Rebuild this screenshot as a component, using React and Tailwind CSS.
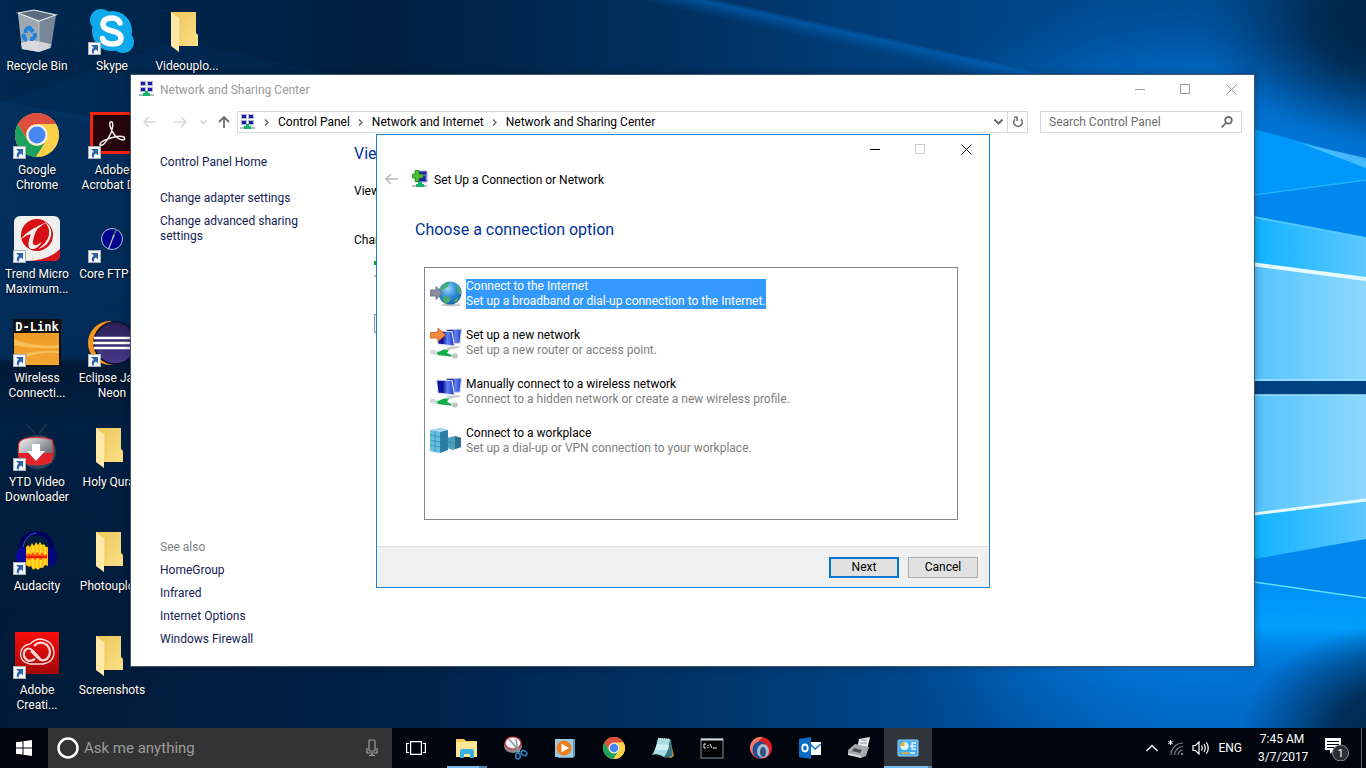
import { useState } from 'react'

const SIDE_LINKS = ['HomeGroup', 'Infrared', 'Internet Options', 'Windows Firewall']
const CRUMBS = ['Control Panel', 'Network and Internet', 'Network and Sharing Center']

/* ---------- wallpaper ---------- */

function Wallpaper() {
  return (
    <svg className="absolute inset-0 w-full h-full" viewBox="0 0 1366 728" preserveAspectRatio="none" aria-hidden="true">
      <defs>
        <linearGradient id="wpTop" x1="0" y1="0" x2="1" y2="0">
          <stop offset="0" stopColor="#002850" />
          <stop offset=".28" stopColor="#001f41" />
          <stop offset=".5" stopColor="#003060" />
          <stop offset=".65" stopColor="#003f7c" />
          <stop offset=".8" stopColor="#00488c" />
          <stop offset="1" stopColor="#004483" />
        </linearGradient>
        <linearGradient id="wpLow" x1="0" y1="0" x2="1" y2="0">
          <stop offset="0" stopColor="#001b38" />
          <stop offset=".28" stopColor="#002047" />
          <stop offset=".5" stopColor="#003366" />
          <stop offset=".7" stopColor="#004b93" />
          <stop offset=".85" stopColor="#006ac9" />
          <stop offset="1" stopColor="#0072d2" />
        </linearGradient>
        <linearGradient id="wpFade" x1="0" y1="0" x2="0" y2="1">
          <stop offset=".3" stopColor="#fff" stopOpacity="0" />
          <stop offset=".85" stopColor="#fff" />
        </linearGradient>
        <mask id="wpLowMask">
          <rect width="1366" height="728" fill="url(#wpFade)" />
        </mask>
        <radialGradient id="wpGlow" gradientUnits="userSpaceOnUse" cx="1200" cy="385" r="410">
          <stop offset="0" stopColor="#00a0ff" />
          <stop offset=".5" stopColor="#0090f8" />
          <stop offset=".75" stopColor="#0070d0" stopOpacity=".8" />
          <stop offset="1" stopColor="#0058a8" stopOpacity="0" />
        </radialGradient>
        <linearGradient id="wpPane" x1="0" y1="0" x2="1" y2="0">
          <stop offset=".4" stopColor="#4cc0ff" />
          <stop offset="1" stopColor="#8ed8ff" />
        </linearGradient>
        <linearGradient id="wpEdge" x1="0" y1="0" x2="1" y2="0">
          <stop offset=".45" stopColor="#0cb2ff" />
          <stop offset="1" stopColor="#5cc8ff" />
        </linearGradient>
        <linearGradient id="wpBeam" gradientUnits="userSpaceOnUse" x1="886" y1="37" x2="882" y2="55">
          <stop offset="0" stopColor="#0068c0" stopOpacity=".1" />
          <stop offset=".25" stopColor="#0068c0" stopOpacity=".6" />
          <stop offset="1" stopColor="#0058a8" stopOpacity="0" />
        </linearGradient>
        <radialGradient id="wpDark">
          <stop offset="0" stopColor="#00203f" />
          <stop offset=".45" stopColor="#00284e" stopOpacity=".9" />
          <stop offset=".75" stopColor="#003566" stopOpacity=".45" />
          <stop offset="1" stopColor="#003f7a" stopOpacity="0" />
        </radialGradient>
        <linearGradient id="wpLowGlow" x1="0" y1="0" x2="0" y2="1">
          <stop offset="0" stopColor="#0090f6" />
          <stop offset=".5" stopColor="#00a2ff" stopOpacity=".9" />
          <stop offset="1" stopColor="#0078dc" stopOpacity="0" />
        </linearGradient>
        <linearGradient id="wpUpGlow" x1="0" y1="1" x2="0" y2="0">
          <stop offset="0" stopColor="#0080e4" stopOpacity=".9" />
          <stop offset="1" stopColor="#0060b8" stopOpacity="0" />
        </linearGradient>
        <linearGradient id="wpShade" x1="0" y1="0" x2="0" y2="1">
          <stop offset="0" stopColor="#001228" stopOpacity="0" />
          <stop offset=".2" stopColor="#001228" stopOpacity=".55" />
          <stop offset="1" stopColor="#001228" stopOpacity="0" />
        </linearGradient>
      </defs>
      <rect width="1366" height="728" fill="url(#wpTop)" />
      <rect width="1366" height="728" fill="url(#wpLow)" mask="url(#wpLowMask)" />
      <path d="M0 102L400 165V360H0z" fill="#0a4b8c" opacity=".22" />
      <path d="M180 40L400 90V200L0 102z" fill="#0a4b8c" opacity=".12" />
      <rect y="355" width="400" height="70" fill="url(#wpShade)" />
      <rect x="740" width="626" height="728" fill="url(#wpGlow)" />
      <path d="M720 0L1052 76H960L640 0z" fill="url(#wpBeam)" />
      <path d="M1150 60L1366 100V200H1150z" fill="url(#wpUpGlow)" />
      <ellipse cx="1410" cy="20" rx="210" ry="125" fill="url(#wpDark)" />
      <path d="M1150 100L1366 160V180L1150 208z" fill="#0098fa" />
      <path d="M1150 208L1366 180V238L1150 198z" fill="#0088ee" />
      <path d="M1254 195L1366 180" stroke="#1cb4ff" strokeWidth="1.5" />
      <path d="M1300 143L1366 158V168z" fill="#6fd0ff" opacity=".6" />
      <path d="M1150 197L1366 238V279L1150 251z" fill="url(#wpEdge)" />
      <path d="M1254 217L1366 238" stroke="#5fd0ff" strokeWidth="2" opacity=".8" />
      <path d="M1150 251L1366 279V381H1150z" fill="url(#wpPane)" />
      <path d="M1150 251L1366 279" stroke="#e6fbff" strokeWidth="4" />
      <rect x="1240" y="580" width="126" height="96" fill="url(#wpLowGlow)" />
      <path d="M1150 560L1366 539V598L1150 567z" fill="#0088ee" />
      <path d="M1254 582L1366 598" stroke="#5fe0ff" strokeWidth="1.5" />
      <path d="M1150 527L1366 500V539L1150 578z" fill="url(#wpEdge)" />
      <path d="M1150 395H1366V500L1150 527z" fill="url(#wpPane)" />
      <path d="M1150 527L1366 500" stroke="#e6fbff" strokeWidth="3" />
      <rect x="1150" y="381" width="216" height="14" fill="#004282" />
      <path d="M1150 380H1366M1150 395H1366" stroke="#a0e4ff" strokeWidth="1.5" />
      <ellipse cx="1410" cy="735" rx="170" ry="112" fill="url(#wpDark)" />
    </svg>
  )
}

/* ---------- desktop icons, all on a 48px box ---------- */

function Folder() {
  return (
    <svg viewBox="0 0 48 48" className="w-12 h-12">
      <defs>
        <linearGradient id="fldBack" x1="0" y1="0" x2="1" y2="1">
          <stop offset="0" stopColor="#edc65a" />
          <stop offset="1" stopColor="#fbdf86" />
        </linearGradient>
      </defs>
      <path d="M8 5H33V26L35 28V39H16L8 30z" fill="url(#fldBack)" />
      <path d="M8 5L17 12V35H16V45L8 39z" fill="#ffe8a6" />
      <path d="M17 12V35" stroke="#e8c465" strokeWidth=".8" />
    </svg>
  )
}

function RecycleBin() {
  return (
    <svg viewBox="0 0 48 48" className="w-12 h-12">
      <path d="M5 6L9 42L26 45L38 41L43 8L26 14z" fill="#8d99a6" opacity=".85" />
      <path d="M5 6L9 42L26 45L26 14z" fill="#a8b0b8" opacity=".8" />
      <path d="M5 6L21 3L43 8L26 14z" fill="#5a6b7e" stroke="#e4e8ea" strokeWidth="1.2" />
      <path d="M8 36L19 33L38 37L37 41L26 45L9 42z" fill="#e0e2e3" opacity=".85" />
      <path d="M26 14V44" stroke="#ccd2d6" strokeWidth=".7" />
      <g fill="none" stroke="#1d83dc" strokeWidth="4">
        <path d="M12.500 26Q13 20 17 21L20 25" />
        <path d="M21.500 26Q23 31 19 32H17" />
        <path d="M11 27Q10 32 14 33" />
      </g>
    </svg>
  )
}

function Skype() {
  return (
    <svg viewBox="0 0 48 48" className="w-12 h-12">
      <g fill="#0faaec">
        <circle cx="13" cy="13" r="11" />
        <circle cx="35" cy="35" r="11" />
        <circle cx="24" cy="24" r="20" />
      </g>
      <path d="M32 16Q30 11 24 11Q15 11 15 17.500Q15 22 24 24Q33 26 33 31Q33 37 24.500 37Q16 37 14.500 31.500" fill="none" stroke="#fff" strokeWidth="5.500" strokeLinecap="round" />
    </svg>
  )
}

function Chrome({ className }) {
  return (
    <svg viewBox="0 0 48 48" className={className}>
      <circle cx="24" cy="24" r="22" fill="#fcd04b" />
      <path d="M4.950 13A22 22 0 0 1 43.050 13H24A11 11 0 0 0 14.470 29.500z" fill="#de4f41" />
      <path d="M4.950 13A22 22 0 0 0 23 46L33.500 29.500A11 11 0 0 1 14.470 29.500z" fill="#1ca15f" />
      <path d="M43.050 13A22 22 0 0 1 23 46L33.500 29.500A11 11 0 0 0 24 13z" fill="#fdd04a" />
      <circle cx="24" cy="24" r="10.500" fill="#f3f3f3" />
      <circle cx="24" cy="24" r="8.500" fill="#4487f3" />
    </svg>
  )
}

function Acrobat() {
  return (
    <svg viewBox="0 0 48 48" className="w-12 h-12">
      <rect x="3.500" y="2.500" width="44" height="39" fill="#26060a" stroke="#f8230b" strokeWidth="3" />
      <path d="M12 34Q16 36 23 22Q26 13 24 11Q21 10 22 15Q26 27 34 29Q38 29 36 26Q31 24 20 28Q11 31 12 34z" fill="none" stroke="#f3eeee" strokeWidth="1.500" />
    </svg>
  )
}

function TrendMicro() {
  return (
    <svg viewBox="0 0 48 48" className="w-12 h-12">
      <rect x="1" y="1" width="46" height="45" rx="6" fill="#efefed" />
      <path d="M47 34V40Q47 46 41 46H13Q35 46 47 34z" fill="#d7141b" />
      <circle cx="24" cy="20" r="16" fill="#d50f13" />
      <path d="M7 25Q14 15 34 7Q24 13 20 19Q14 19 7 25z" fill="#efefed" />
      <path d="M20 14L25 12Q19 24 20 29Q22 32 29 27Q24 35 18 34Q12 32 20 14z" fill="#efefed" />
      <path d="M31 6Q44 15 34 29Q30 33 25 34Q34 28 36 20Q37 12 31 6z" fill="#efefed" />
    </svg>
  )
}

function CoreFtp() {
  return (
    <svg viewBox="0 0 48 48" className="w-12 h-12">
      <circle cx="24" cy="24" r="10.500" fill="#00008b" stroke="#b4bde0" strokeWidth="1" />
      <path d="M28.500 14.500L24.500 23" stroke="#45607a" strokeWidth="2" />
      <path d="M26 20L20.500 34" stroke="#b8bec8" strokeWidth="1.300" />
    </svg>
  )
}

function DLink() {
  return (
    <svg viewBox="0 0 48 48" className="w-12 h-12">
      <defs>
        <linearGradient id="dlink" x1="0" y1="0" x2="0" y2="1">
          <stop offset="0" stopColor="#ee9c26" />
          <stop offset="1" stopColor="#f2a431" />
        </linearGradient>
      </defs>
      <rect width="48" height="48" fill="#111" />
      <rect x="1" y="14" width="45" height="32" fill="url(#dlink)" />
      <path d="M1 20Q18 28 46 26V29Q20 30 1 26zM14 34Q28 31 46 32V34Q28 33 14 38z" fill="#f6bf57" />
      <text x="24" y="12" textAnchor="middle" fill="#fff" fontSize="12" fontWeight="700" fontFamily="DejaVu Sans Mono, monospace">D-Link</text>
    </svg>
  )
}

function Eclipse() {
  return (
    <svg viewBox="0 0 48 48" className="w-12 h-12">
      <defs>
        <linearGradient id="ecl" x1="0" y1="0" x2="0" y2="1">
          <stop offset="0" stopColor="#2b2154" />
          <stop offset="1" stopColor="#473a8c" />
        </linearGradient>
      </defs>
      <path d="M22 2A22 22 0 0 0 22 46L26 45A22 22 0 0 1 24 3z" fill="#f7941e" />
      <circle cx="27" cy="24" r="21" fill="url(#ecl)" stroke="#10102c" strokeWidth="1.500" />
      <path d="M6 19H48M5 24H48M6 29H48" stroke="#fff" strokeWidth="2.500" />
    </svg>
  )
}

function Ytd() {
  return (
    <svg viewBox="0 0 48 48" className="w-12 h-12">
      <defs>
        <linearGradient id="ytdTop" x1="0" y1="0" x2="1" y2="1">
          <stop offset="0" stopColor="#fafafa" />
          <stop offset="1" stopColor="#3a3f45" />
        </linearGradient>
      </defs>
      <path d="M13 1L22 10M34 1L26 10" stroke="#23384d" strokeWidth="1.200" />
      <ellipse cx="25" cy="29" rx="18" ry="17" fill="#2c4358" />
      <path d="M6 20Q8 16 15 15Q29 13 39 17Q42 30 38 39Q24 45 8 39Q4 30 6 20z" fill="url(#ytdTop)" stroke="#e2373d" strokeWidth="1.200" />
      <path d="M5 30H40Q40 35 38 39Q24 45 8 39Q6 35 5 30z" fill="#e0222c" />
      <path d="M19 21H27V28H32L23 38L14 28H19z" fill="#fff" />
    </svg>
  )
}

function Audacity() {
  return (
    <svg viewBox="0 0 48 48" className="w-12 h-12">
      <path d="M8 26Q7 7 23 6Q40 7 39 26" fill="none" stroke="#00005f" strokeWidth="4.500" />
      <path d="M10 20Q12 8 23 6" fill="none" stroke="#2e5cc0" strokeWidth="1" />
      <ellipse cx="9" cy="30" rx="6" ry="10" fill="#0909a0" />
      <ellipse cx="38" cy="30" rx="6" ry="10" fill="#07077c" />
      <path d="M13 20L15 18L17 20L19 16L21 19L23 15L25 18L27 15L29 18L31 17L33 20L35 20V39L32 38L30 41L28 40L25 43L23 41L20 43L18 39L16 40L13 38z" fill="#ffc010" />
      <path d="M16 21V38M20 19V41M24 18V42M28 18V41M32 20V38" stroke="#ffe840" strokeWidth="1.200" />
      <path d="M13 28L16 26L18 28L20 25L22 28L24 25L27 28L29 25L31 28L34 27V32L31 31L28 33L25 31L22 33L19 31L16 33L13 31z" fill="#ff5a10" />
      <path d="M13 30H34" stroke="#e82408" strokeWidth="2" />
    </svg>
  )
}

function CreativeCloud() {
  return (
    <svg viewBox="0 0 48 48" className="w-12 h-12">
      <defs>
        <linearGradient id="ccBg" x1="0" y1="0" x2="0" y2="1">
          <stop offset="0" stopColor="#fb0d0d" />
          <stop offset="1" stopColor="#a30707" />
        </linearGradient>
      </defs>
      <rect x="2" y="1" width="44" height="42" fill="url(#ccBg)" />
      <g fill="none" stroke="#f9dada">
        <path d="M17 33Q7 31 7.500 22Q9 14 17 13Q22 8 28 8Q40 10 41 21Q41 31 30 33z" strokeWidth="1.300" />
        <path d="M28 29L20 20Q15 15 11.500 20Q9.500 26 14 29Q17 31 22 28" strokeWidth="2.200" />
        <path d="M21 15Q27 9 34 14Q40 21 34 28Q29 31 25 27L18 20" strokeWidth="2.200" />
      </g>
    </svg>
  )
}

function ShortcutBadge() {
  return (
    <svg viewBox="0 0 13 13" className="absolute left-0 bottom-0 w-[13px] h-[13px]">
      <rect x=".5" y=".5" width="12" height="12" fill="#f4f6f8" stroke="#a9b2bb" />
      <path d="M3 3H10V9.500L8 7.500Q5.500 8 6 11.500H4.500Q2.500 8 5.700 5.500z" fill="#2b62a9" />
    </svg>
  )
}

const DESKTOP_ITEMS = [
  { lines: ['Recycle Bin'], Icon: RecycleBin },
  { lines: ['Google', 'Chrome'], Icon: Chrome, shortcut: true },
  { lines: ['Trend Micro', 'Maximum...'], Icon: TrendMicro, shortcut: true },
  { lines: ['Wireless', 'Connecti...'], Icon: DLink, shortcut: true },
  { lines: ['YTD Video', 'Downloader'], Icon: Ytd, shortcut: true },
  { lines: ['Audacity'], Icon: Audacity, shortcut: true },
  { lines: ['Adobe', 'Creati...'], Icon: CreativeCloud, shortcut: true },
  { lines: ['Skype'], Icon: Skype, shortcut: true },
  { lines: ['Adobe', 'Acrobat DC'], Icon: Acrobat, shortcut: true },
  { lines: ['Core FTP LE'], Icon: CoreFtp, shortcut: true },
  { lines: ['Eclipse Java', 'Neon'], Icon: Eclipse, shortcut: true },
  { lines: ['Holy Quran'], Icon: Folder },
  { lines: ['Photouplo...'], Icon: Folder },
  { lines: ['Screenshots'], Icon: Folder },
  { lines: ['Videouplo...'], Icon: Folder },
]

function DesktopIcons() {
  return (
    <div className="relative grid grid-flow-col grid-rows-7 auto-cols-[74px] gap-x-px w-max">
      {DESKTOP_ITEMS.map(({ lines, Icon, shortcut }) => (
        <button key={lines.join(' ')} className="h-[104px] pt-[7px] flex flex-col items-center">
          <span className="relative block w-12 h-12 shrink-0">
            <Icon className="w-12 h-12" />
            {shortcut && <ShortcutBadge />}
          </span>
          <span className="mt-1 text-xs leading-[15px] text-white text-center [text-shadow:0_1px_2px_#000]">
            {lines.map((line) => (
              <span key={line} className="block whitespace-nowrap">{line}</span>
            ))}
          </span>
        </button>
      ))}
    </div>
  )
}

/* ---------- window parts ---------- */

function NetworkIcon() {
  return (
    <svg viewBox="0 0 16 16" className="w-4 h-4 shrink-0">
      <g fill="#b4b9c8">
        <rect x="1" y="0" width="6" height="5" />
        <rect x="8" y="0" width="6" height="5" />
        <rect x="1" y="6" width="6" height="5" />
        <rect x="8" y="6" width="6" height="5" />
      </g>
      <g fill="#1a1ab8">
        <rect x="2" y="1" width="4" height="3" />
        <rect x="9" y="1" width="4" height="3" />
        <rect x="2" y="7" width="4" height="3" />
        <rect x="9" y="7" width="4" height="3" />
      </g>
      <path d="M0 14H15" stroke="#b5bbb5" strokeWidth="2" />
      <path d="M6 10H9V12H11V15H4V12H6z" fill="#12b36b" />
    </svg>
  )
}

function Caption({ minimize, maximize, close }) {
  return (
    <div className="flex">
      <button aria-label="Minimize" className={`w-[45px] h-7 grid place-items-center ${minimize}`}>
        <svg viewBox="0 0 11 11" className="w-[11px] h-[11px]" stroke="currentColor"><path d="M0 5.500H10" /></svg>
      </button>
      <button aria-label="Maximize" className={`w-[45px] h-7 grid place-items-center ${maximize}`}>
        <svg viewBox="0 0 11 11" className="w-[11px] h-[11px]" fill="none" stroke="currentColor"><path d="M.5.500H9.500V9.500H.5z" /></svg>
      </button>
      <button aria-label="Close" className={`w-[46px] h-7 grid place-items-center ${close}`}>
        <svg viewBox="0 0 11 11" className="w-[11px] h-[11px]" stroke="currentColor"><path d="M.5.500L10.500 10.500M10.500.500L.5 10.500" /></svg>
      </button>
    </div>
  )
}

function Arrow({ className, d = 'M6 1L1 6L6 11M1 6H13' }) {
  return (
    <svg viewBox="0 0 13 12" className={`w-[13px] h-3 ${className}`} fill="none" stroke="currentColor" strokeWidth="1.500">
      <path d={d} />
    </svg>
  )
}

function ControlPanelWindow() {
  return (
    <section aria-label="Network and Sharing Center" className="absolute left-[130px] top-[74px] w-[1125px] h-[593px] bg-white border border-[#3f566d] shadow-[0_0_8px_rgba(0,0,0,0.3)] flex flex-col">
      <header className="flex items-center h-7 pl-2 text-[#999999]">
        <NetworkIcon />
        <h1 className="pl-[5px] pt-px flex-1 text-xs">Network and Sharing Center</h1>
        <Caption minimize="text-[#999999]" maximize="text-[#999999]" close="text-[#999999]" />
      </header>

      {/* Address row */}
      <div className="flex items-center h-[22px] mt-2 pl-3 pr-3">
        <button aria-label="Back" className="text-[#d9d9d9]"><Arrow /></button>
        <button aria-label="Forward" className="ml-[18px] text-[#d9d9d9]"><Arrow d="M7 1L12 6L7 11M12 6H0" /></button>
        <button aria-label="Recent" className="ml-[13px] text-[#d0d0d0]">
          <svg viewBox="0 0 7 5" className="w-[7px] h-[5px]" fill="none" stroke="currentColor" strokeWidth="1.500"><path d="M.5.500L3.500 3.500L6.500.500" /></svg>
        </button>
        <button aria-label="Up" className="ml-[11px] text-[#6b6b6b]">
          <svg viewBox="0 0 12 12" className="w-3 h-3" fill="none" stroke="currentColor" strokeWidth="1.800"><path d="M1 6L6 1L11 6M6 1V12" /></svg>
        </button>
        <nav className="ml-[7px] flex-1 h-[22px] border border-[#d9d9d9] flex items-center pl-0.5">
          <NetworkIcon />
          {CRUMBS.map((crumb) => (
            <span key={crumb} className="flex items-center">
              <svg viewBox="0 0 5 7" className="ml-2 mr-[9px] w-[5px] h-[7px]" fill="none" stroke="#5f5f5f" strokeWidth="1.300"><path d="M1 .5L4 3.500L1 6.500" /></svg>
              <a href="#" className="text-xs text-black">{crumb}</a>
            </span>
          ))}
          <span className="flex-1" />
          <button aria-label="Previous locations" className="w-[18px] grid place-items-center">
            <svg viewBox="0 0 9 6" className="w-[9px] h-[6px]" fill="none" stroke="#6b6b6b" strokeWidth="2"><path d="M.5.500L4.500 4.500L8.500.500" /></svg>
          </button>
          <button aria-label="Refresh" className="w-5 h-5 border-l border-[#d9d9d9] grid place-items-center">
            <svg viewBox="0 0 12 12" className="w-3 h-3" fill="none" stroke="#6b6b6b" strokeWidth="1.600"><path d="M3 3.200A4.200 4.200 0 1 0 9 3.200M2 1.300H5V5" /></svg>
          </button>
        </nav>
        <label className="ml-3 w-[202px] h-[22px] border border-[#d9d9d9] flex items-center pl-2 pr-2">
          <input aria-label="Search Control Panel" placeholder="Search Control Panel" className="flex-1 min-w-0 text-xs outline-none placeholder:text-[#6d6d6d] placeholder:opacity-100" />
          <svg viewBox="0 0 12 12" className="w-3 h-3" fill="none" stroke="#6b6b6b" strokeWidth="1.800"><circle cx="7.500" cy="4.300" r="3.300" /><path d="M5 6.800L.7 11.300" /></svg>
        </label>
      </div>

      <div className="flex flex-1 text-xs leading-[15px]">
        <aside className="w-[223px] pl-[29px] pt-[22px] pb-[19px] flex flex-col text-[#151c55]">
          <a href="#">Control Panel Home</a>
          <a href="#" className="mt-[21px]">Change adapter settings</a>
          <a href="#" className="mt-2 w-[150px]">Change advanced sharing settings</a>
          <div className="mt-auto flex flex-col gap-2">
            <span className="text-[#808080]">See also</span>
            {SIDE_LINKS.map((link) => (
              <a key={link} href="#">{link}</a>
            ))}
          </div>
        </aside>
        <main className="flex-1 pt-[9px] text-black">
          <h2 className="text-base leading-6 text-[#003399]">View</h2>
          <p className="mt-[18px]">View</p>
          <p className="mt-[34px]">Change</p>
          <div className="mt-3 pl-5 flex flex-col gap-[34px]">
            <svg viewBox="0 0 20 20" className="w-5 h-5"><rect x="0" y="1" width="6" height="4" fill="#139a3b" /><path d="M0 16H12" stroke="#b5bbb5" strokeWidth="2" /></svg>
            <svg viewBox="0 0 20 20" className="w-5 h-5"><rect x=".5" y=".5" width="18" height="18" fill="#eef1f5" stroke="#8b97a8" /></svg>
          </div>
        </main>
      </div>
    </section>
  )
}

/* ---------- wizard ---------- */

function GlobeIcon() {
  return (
    <svg viewBox="0 0 32 32" className="w-8 h-8 shrink-0">
      <defs>
        <radialGradient id="globe" cx=".4" cy=".3" r=".75">
          <stop offset="0" stopColor="#9fd8fb" />
          <stop offset=".5" stopColor="#3490dc" />
          <stop offset="1" stopColor="#1459ab" />
        </radialGradient>
      </defs>
      <ellipse cx="21" cy="27" rx="10" ry="1.500" fill="#c4c8cc" />
      <circle cx="20" cy="15" r="11.500" fill="url(#globe)" />
      <path d="M13 7Q17 3 20 5Q19 8 16 10Q12 13 10 11zM26 6Q31 11 31 16Q28 17 27 12zM13 18Q19 18 21 21Q19 25 16 26Q12 23 13 18zM24 22L29 19Q28 23 25 25z" fill="#48ad6c" />
      <path d="M0 12H6V8.500L12.500 15L6 21.500V18H0z" fill="#8b8f9e" stroke="#60636f" strokeWidth=".8" />
    </svg>
  )
}

function MonitorsIcon({ arrow }) {
  return (
    <svg viewBox="0 0 32 32" className="w-8 h-8 shrink-0">
      <defs>
        <linearGradient id="screen" x1="0" y1="0" x2="1" y2="0">
          <stop offset=".35" stopColor="#0a12a0" />
          <stop offset=".6" stopColor="#5f86ee" />
          <stop offset="1" stopColor="#1a34c4" />
        </linearGradient>
      </defs>
      <path d="M16 2.500L31.500 2L30 16L20 17z" fill="url(#screen)" stroke="#cfd4de" strokeWidth="1.200" />
      <path d="M6.500 4L22 4.500L24.500 19L8 17z" fill="url(#screen)" stroke="#dde1e9" strokeWidth="1.200" />
      <path d="M16 20L30 19L29 21L19 23z" fill="#c9cdd2" />
      <ellipse cx="3" cy="25" rx="3" ry="2" fill="#bccac4" />
      <path d="M1 23L27 28V31L1 27z" fill="#d3dad8" />
      <ellipse cx="25" cy="29" rx="3" ry="2.500" fill="#bccac4" />
      <path d="M7 25.500L14 22.500H19L17 26L21 28V29.500L8 28z" fill="#0fae48" />
      {arrow && <path d="M0 5.500H8V1L15.500 8L8 14.500V11H0z" fill="#f5893d" stroke="#c85c15" strokeWidth=".8" />}
    </svg>
  )
}

function BuildingsIcon() {
  return (
    <svg viewBox="0 0 32 32" className="w-8 h-8 shrink-0">
      <path d="M17 13L25 11L31 13V22L23 25L17 23z" fill="#4c9fbd" />
      <path d="M25 11L31 13V22L25 24z" fill="#2d7091" />
      <path d="M0 5L10 3L18 5V25L9 28L0 26z" fill="#63bfe0" />
      <path d="M10 7L18 5V25L10 28z" fill="#2c7fa5" />
      <path d="M0 5L10 3L18 5L10 7z" fill="#a5d8ea" />
      <path d="M0 10L10 12L18 10M0 15L10 17L18 15M0 20L10 22L18 20M5 6V27M14 6V26M18 17L24 18L31 16" fill="none" stroke="#287394" strokeWidth=".5" />
    </svg>
  )
}

const OPTIONS = [
  { title: 'Connect to the Internet', text: 'Set up a broadband or dial-up connection to the Internet.', icon: <GlobeIcon /> },
  { title: 'Set up a new network', text: 'Set up a new router or access point.', icon: <MonitorsIcon arrow /> },
  { title: 'Manually connect to a wireless network', text: 'Connect to a hidden network or create a new wireless profile.', icon: <MonitorsIcon /> },
  { title: 'Connect to a workplace', text: 'Set up a dial-up or VPN connection to your workplace.', icon: <BuildingsIcon /> },
]

function SetupDialog() {
  const [selected, setSelected] = useState(0)

  return (
    <section role="dialog" aria-label="Set Up a Connection or Network" className="absolute left-[376px] top-[134px] w-[614px] h-[454px] bg-white border border-[#1883d7] flex flex-col text-xs">
      <div className="flex justify-end">
        <Caption minimize="text-black" maximize="text-[#cccccc]" close="text-black" />
      </div>
      <div className="flex items-center h-6 mt-1 pl-2">
        <button aria-label="Back" className="text-[#b5b5b5]"><Arrow /></button>
        <svg viewBox="0 0 16 18" className="ml-[14px] w-4 h-[18px]">
          <path d="M4 1H15V12H4z" fill="#1c1cb4" stroke="#b9bdc9" />
          <path d="M9 5H14V10" fill="none" stroke="#7d9ce8" />
          <path d="M0 16H15" stroke="#b5bbb5" strokeWidth="2" />
          <path d="M6 12H10V14H12V17H4V14H6z" fill="#12b36b" />
          <path d="M3 .5H7V4H11V8H7V11.500H3V8H.5V4H3z" fill="#4cc22e" stroke="#1e7d13" strokeWidth=".8" />
        </svg>
        <h2 className="ml-[6px] pt-px">Set Up a Connection or Network</h2>
      </div>
      <h3 className="mt-[27px] pl-[38px] text-base leading-6 text-[#003399]">Choose a connection option</h3>

      <ul className="ml-[47px] mr-[31px] mt-[25px] h-[253px] border border-[#828790] pt-[11px] flex flex-col gap-[19px]">
        {OPTIONS.map((option, i) => (
          <li key={option.title}>
            <button onClick={() => setSelected(i)} className="flex items-center h-[30px] pl-[5px] text-left leading-[15px]">
              {option.icon}
              <span className={`ml-1 ${selected === i ? 'bg-[#3399ff] text-white' : ''}`}>
                <span className="block">{option.title}</span>
                <span className={`block ${selected === i ? '' : 'text-[#808080]'}`}>{option.text}</span>
              </span>
            </button>
          </li>
        ))}
      </ul>

      <footer className="mt-auto h-[41px] shrink-0 border-t border-[#dfdfdf] bg-[#f0f0f0] flex items-center justify-end gap-[9px] pr-[11px]">
        <button className="w-[70px] h-[21px] leading-4 border-2 border-[#0078d7] bg-[#e1e1e1]">Next</button>
        <button className="w-[70px] h-[21px] leading-4 border border-[#adadad] bg-[#e1e1e1]">Cancel</button>
      </footer>
    </section>
  )
}

/* ---------- taskbar ---------- */

const TASKBAR_APPS = [
  {
    name: 'File Explorer',
    running: true,
    icon: (
      <>
        <path d="M1 3H9L11 5H22V20H1z" fill="#f8cf5c" />
        <path d="M1 6H22V21H1z" fill="#fee695" />
        <path d="M5 22V15Q5 13 7 13H17Q19 13 19 15V22H15V18H9V22z" fill="#39b0e3" />
      </>
    ),
  },
  {
    name: 'Snipping Tool',
    icon: (
      <>
        <ellipse cx="9" cy="10" rx="9" ry="7" fill="#8a8a8a" />
        <ellipse cx="9" cy="7" rx="8" ry="6" fill="#f4f4f6" stroke="#d02c36" strokeWidth="1.200" />
        <path d="M5 3L16 16M12 3L14 17" stroke="#8d98a3" strokeWidth="1.500" />
        <g fill="none" stroke="#2586c4" strokeWidth="1.600">
          <ellipse cx="20" cy="17" rx="3" ry="2.200" transform="rotate(35 20 17)" />
          <ellipse cx="14" cy="20" rx="2.200" ry="3" />
        </g>
      </>
    ),
  },
  {
    name: 'Media Player',
    icon: (
      <>
        <path d="M5 3H22V20L20 22H5z" fill="#5c9cba" />
        <rect x="2" y="3" width="18" height="18" fill="#9bcbe2" />
        <circle cx="11" cy="12" r="7.500" fill="#f07e1c" />
        <path d="M8.500 7.500L16 12L8.500 16.500z" fill="#fff" />
      </>
    ),
  },
  { name: 'Google Chrome', chrome: true },
  {
    name: 'Notepad',
    icon: (
      <>
        <path d="M19 3L23 20L20 22L15 21z" fill="#b58e42" />
        <path d="M18 3L20 4L21 20L13 22z" fill="#2f7684" />
        <path d="M7 2L19 3Q17 17 13 21Q7 17 1 19Q5 13 7 2z" fill="#a9dde4" />
        <path d="M6 8L18 9L17 14L4 14z" fill="#cdeef2" />
        <path d="M7 2.500L19 3.500" stroke="#e7e7e7" strokeDasharray="1 1" strokeWidth="1.500" />
      </>
    ),
  },
  {
    name: 'Command Prompt',
    icon: (
      <>
        <rect x="1" y="3" width="22" height="19" fill="#050505" stroke="#8a8d90" />
        <path d="M1 3.500H23" stroke="#d5d8da" strokeWidth="2" />
        <path d="M6 8H4V12H6M8 9V10M8 11V12M10 8L12 12M13 12H17" fill="none" stroke="#e8e8e8" />
      </>
    ),
  },
  {
    name: 'Browser',
    icon: (
      <>
        <circle cx="12" cy="12" r="11" fill="#e01c20" />
        <path d="M1 13A11 11 0 0 1 14 1Q4 8 9 22Q2 19 1 13z" fill="#ef7a6a" />
        <ellipse cx="11" cy="14" rx="7.500" ry="8.500" fill="#1d4f94" />
        <ellipse cx="14" cy="15" rx="6" ry="7" fill="#a4b9d0" />
        <ellipse cx="14" cy="16" rx="3" ry="5" fill="#31527f" />
      </>
    ),
  },
  {
    name: 'Outlook',
    icon: (
      <>
        <rect x="11" y="6" width="12" height="13" fill="#fff" />
        <path d="M12 8L17 13L23 8" fill="none" stroke="#0a70c8" strokeWidth="1.500" />
        <path d="M1 3L13 1V23L1 21z" fill="#0a6cc4" />
        <ellipse cx="7" cy="12" rx="2.700" ry="3.500" fill="none" stroke="#fff" strokeWidth="1.800" />
      </>
    ),
  },
  {
    name: 'Fax and Scan',
    icon: (
      <>
        <path d="M12 3L23 1L20 14L10 14z" fill="#eceeef" />
        <path d="M1 14L8 8L22 11L19 20L14 22L1 17z" fill="#a5aaae" />
        <path d="M1 17L14 20V22L1 19z" fill="#dfe2e4" />
        <path d="M7 12L15 14L13 17L5 15z" fill="#4a4f55" />
        <path d="M14 4H20M13 7H20" stroke="#8a9097" />
      </>
    ),
  },
  {
    name: 'Control Panel',
    active: true,
    icon: (
      <>
        <rect x="2" y="4" width="20" height="16" rx="1" fill="#45aef0" stroke="#8fd2f8" />
        <circle cx="8.500" cy="10" r="4" fill="#e8f6ff" />
        <path d="M8.500 10V6A4 4 0 0 0 4.500 10z" fill="#f7a81b" />
        <path d="M14 10H16V7H20M16 10H20M16 10V13H20" fill="none" stroke="#e8f6ff" strokeWidth="1.300" />
        <path d="M5 17H13" stroke="#f7a81b" strokeWidth="1.500" />
        <path d="M14 17H19" stroke="#e8f6ff" strokeWidth="1.500" />
      </>
    ),
  },
]

function Taskbar() {
  return (
    <footer className="relative h-10 shrink-0 bg-[#01060e] flex items-stretch text-white text-xs">
      <button aria-label="Start" className="w-12 grid place-items-center">
        <svg viewBox="0 0 16 16" className="w-4 h-4" fill="#fff">
          <path d="M0 2.300L6.500 1.400V7.500H0zM7.500 1.200L16 0V7.500H7.500zM0 8.500H6.500V14.600L0 13.700zM7.500 8.500H16V16L7.500 14.800z" />
        </svg>
      </button>
      <label className="w-[344px] bg-[#333333] flex items-center pl-2">
        <svg viewBox="0 0 24 24" className="w-6 h-6 shrink-0"><circle cx="12" cy="12" r="9.500" fill="none" stroke="#fff" strokeWidth="2.500" /></svg>
        <input aria-label="Ask me anything" placeholder="Ask me anything" className="ml-1 pt-0.5 flex-1 min-w-0 text-[15px] outline-none placeholder:text-[#9b9b9b] placeholder:opacity-100" />
        <svg viewBox="0 0 12 18" className="mr-[14px] w-3 h-[18px]" fill="none" stroke="#a0a0a0" strokeWidth="1.200">
          <rect x="3" y="1" width="6" height="11" rx="1" />
          <path d="M1 9V14H11V9M6 14V16.500M3 16.500H9" />
        </svg>
      </label>
      <button aria-label="Task View" className="w-12 grid place-items-center">
        <svg viewBox="0 0 20 14" className="w-5 h-[14px]" fill="none" stroke="#fff" strokeWidth="1.200">
          <path d="M4.600.6H15.400V13.400H4.600zM3 2.500H.6V11.500H3M17 2.500H19.400V11.500H17" />
        </svg>
      </button>
      <div className="ml-[3px] flex gap-px">
        {TASKBAR_APPS.map((app) => (
          <button key={app.name} aria-label={app.name} className={`relative w-12 grid place-items-center ${app.active ? 'bg-[#31363d]' : ''}`}>
            {app.chrome ? <Chrome className="w-6 h-6" /> : <svg viewBox="0 0 24 24" className="w-6 h-6">{app.icon}</svg>}
            {app.running && (
              <span className="absolute left-1 right-1 bottom-0 h-0.5 flex">
                <span className="flex-1 bg-[#76b9ed]" />
                <span className="w-2 bg-[#5385ad]" />
              </span>
            )}
            {app.active && (
              <span className="absolute inset-x-0 bottom-0 h-0.5 flex">
                <span className="flex-1 bg-[#76b9ed]" />
                <span className="w-1 bg-[#5385ad]" />
              </span>
            )}
          </button>
        ))}
      </div>

      {/* Tray */}
      <div className="ml-auto flex items-center">
        <button aria-label="Show hidden icons">
          <svg viewBox="0 0 12 8" className="w-3 h-2" fill="none" stroke="#fff" strokeWidth="1.400"><path d="M.5 7L6 1.500L11.500 7" /></svg>
        </button>
        <svg viewBox="0 0 16 16" className="ml-[10px] w-4 h-4" fill="none">
          <path d="M3 15A12 12 0 0 1 15 3M6.500 15A8.500 8.500 0 0 1 15 6.500M10 15A5 5 0 0 1 15 10" stroke="#7c8085" strokeWidth="1.200" />
          <circle cx="14" cy="14" r="1.300" fill="#7c8085" />
          <path d="M2.500 0V5M.3 1.200L4.700 3.800M4.700 1.200L.3 3.800" stroke="#fff" />
        </svg>
        <svg viewBox="0 0 18 14" className="ml-2 w-[18px] h-[14px]" fill="none" stroke="#fff" strokeWidth="1.200">
          <path d="M1 4.500H3.500L7 1V13L3.500 9.500H1zM9.500 4.500Q11 7 9.500 9.500M12 3Q14.500 7 12 11M14.500 1.500Q18 7 14.500 12.500" />
        </svg>
        <span className="ml-2">ENG</span>
        <time className="ml-4 w-12 text-center leading-[18px] whitespace-nowrap">
          <span className="block">7:45 AM</span>
          <span className="block">3/7/2017</span>
        </time>
        <button aria-label="Notifications" className="ml-[18px]">
          <svg viewBox="0 0 26 26" className="w-[26px] h-[26px]">
            <path d="M1 3H17V15H10L6 19V15H1z" fill="#fff" />
            <path d="M3 6.500H15M3 9.500H15M3 12.500H10" stroke="#01060e" />
            <circle cx="16.500" cy="18" r="8" fill="#2b2e33" stroke="#8a8d91" />
            <text x="16.500" y="22" textAnchor="middle" fill="#fff" fontSize="11">1</text>
          </svg>
        </button>
        <span className="ml-[11px] mr-1 h-10 border-l border-[#5b6066]" />
      </div>
    </footer>
  )
}

export default function App() {
  return (
    <div className="h-screen overflow-hidden flex flex-col bg-[#002850] font-['Roboto','Noto_Sans',sans-serif]">
      <div className="relative flex-1 min-h-0">
        <Wallpaper />
        <DesktopIcons />
        <ControlPanelWindow />
        <SetupDialog />
      </div>
      <Taskbar />
    </div>
  )
}
